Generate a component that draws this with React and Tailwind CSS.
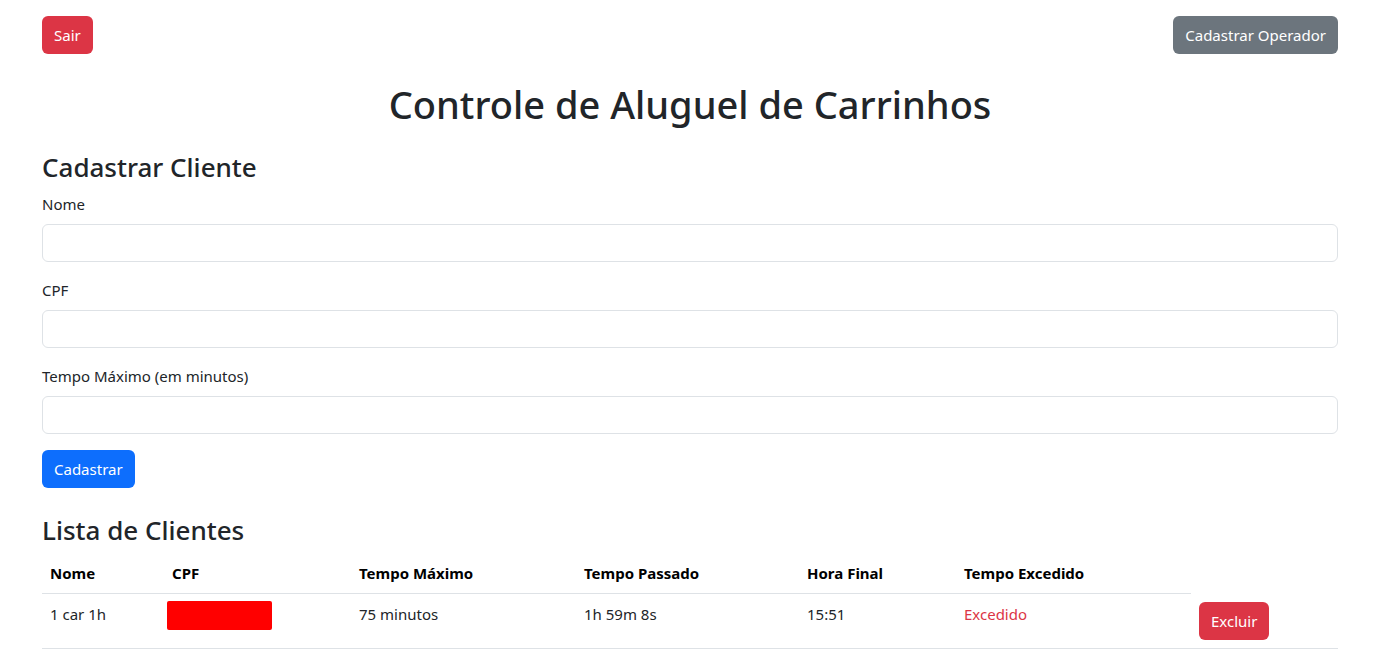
import React from "react";

const font = { fontFamily: '"Segoe UI", "Noto Sans", "Liberation Sans", sans-serif' };

function Field({ label }) {
  return (
    <div className="mb-4">
      <label className="mb-2 block text-[15px] leading-6">{label}</label>
      <input
        type="text"
        className="block h-[38px] w-full rounded-md border border-[#dee2e6] bg-white px-3 outline-none"
      />
    </div>
  );
}

const headers = ["Nome", "CPF", "Tempo Máximo", "Tempo Passado", "Hora Final", "Tempo Excedido"];
const widths = ["w-[122px]", "w-[187px]", "w-[225px]", "w-[223px]", "w-[157px]", "w-[235px]", "w-[147px]"];

export default function App() {
  return (
    <div className="min-h-screen bg-white text-[#212529]" style={font}>
      <div className="ml-[42px] w-[1296px] pt-4">
        <div className="flex items-start justify-between">
          <button className="h-[38px] rounded-md bg-[#dc3545] px-3 text-[15px] leading-6 text-white">Sair</button>
          <button className="h-[38px] rounded-md bg-[#6c757d] px-3 text-[15px] leading-6 text-white">
            Cadastrar Operador
          </button>
        </div>

        <h1 className="mt-[26px] text-center text-[38px] font-medium leading-[48px]">
          Controle de Aluguel de Carrinhos
        </h1>

        <h2 className="mt-[22px] mb-2 text-[26px] font-medium leading-[34px]">Cadastrar Cliente</h2>
        <Field label="Nome" />
        <Field label="CPF" />
        <Field label="Tempo Máximo (em minutos)" />
        <button className="h-[38px] rounded-md bg-[#0d6efd] px-3 text-[15px] leading-6 text-white">Cadastrar</button>

        <h3 className="mt-[25px] mb-[6px] text-[26px] font-medium leading-[34px]">Lista de Clientes</h3>

        <table className="w-full table-fixed border-collapse text-left align-top text-[15px] leading-6">
          <colgroup>
            {widths.map((w, i) => (
              <col key={i} className={w} />
            ))}
          </colgroup>
          <thead>
            <tr>
              {headers.map((h) => (
                <th key={h} className="border-b border-[#dee2e6] p-2 align-top font-bold text-black">
                  {h}
                </th>
              ))}
            </tr>
          </thead>
          <tbody>
            <tr>
              <td className="border-b border-[#dee2e6] p-2 align-top">1 car 1h</td>
              <td className="border-b border-[#dee2e6] p-2 align-top">
                <div className="ml-[-5px] mt-[-1px] h-[29px] w-[105px] rounded-[2px] bg-[#ff0000]" />
              </td>
              <td className="border-b border-[#dee2e6] p-2 align-top">75 minutos</td>
              <td className="border-b border-[#dee2e6] p-2 align-top">1h 59m 8s</td>
              <td className="border-b border-[#dee2e6] p-2 align-top">15:51</td>
              <td className="border-b border-[#dee2e6] p-2 align-top text-[#dc3545]">Excedido</td>
              <td className="border-b border-[#dee2e6] p-2 align-top">
                <button className="h-[38px] rounded-md bg-[#dc3545] px-3 text-[15px] leading-6 text-white">Excluir</button>
              </td>
            </tr>
          </tbody>
        </table>
      </div>
    </div>
  );
}
